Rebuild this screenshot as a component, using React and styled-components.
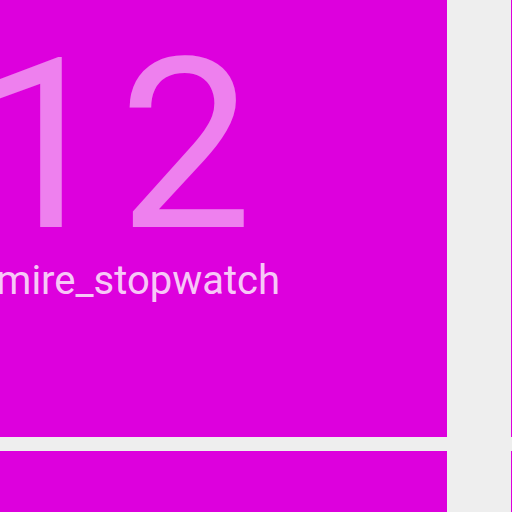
import React from 'react';
import styled, { createGlobalStyle } from 'styled-components';

const GlobalStyle = createGlobalStyle`
  html, body {
    margin: 0;
    padding: 0;
    background: #eeeeee;
    overflow: hidden;
  }
  body {
    font-family: Roboto, "Liberation Sans", sans-serif;
  }
`;

const Viewport = styled.div`
  width: 512px;
  height: 512px;
  overflow: hidden;
  background: #eeeeee;
`;

const Grid = styled.div`
  display: grid;
  grid-template-columns: repeat(2, 507px);
  grid-auto-rows: 437px;
  column-gap: 64px;
  row-gap: 14px;
  margin-left: -60px;
`;

const Tile = styled.div`
  background: #dd00dd;
  display: flex;
  flex-direction: column;
  padding: 27px 0 0 45px;
  box-sizing: border-box;
  overflow: hidden;
`;

const Count = styled.div`
  font-size: 238px;
  line-height: 1;
  letter-spacing: 8px;
  margin-left: -8px;
  color: rgba(255, 255, 255, 0.5);
  white-space: nowrap;
`;

const Label = styled.div`
  font-size: 40px;
  line-height: 1;
  margin: -4px 0 0 -33px;
  color: rgba(255, 255, 255, 0.8);
  white-space: nowrap;
`;

const tiles = [
  { count: '12', label: 'admire_stopwatch' },
  { count: '', label: '' },
  { count: '', label: '' },
  { count: '', label: '' },
];

export default function App() {
  return (
    <Viewport>
      <GlobalStyle />
      <Grid>
        {tiles.map((t, i) => (
          <Tile key={i}>
            {t.count && <Count>{t.count}</Count>}
            {t.label && <Label>{t.label}</Label>}
          </Tile>
        ))}
      </Grid>
    </Viewport>
  );
}
